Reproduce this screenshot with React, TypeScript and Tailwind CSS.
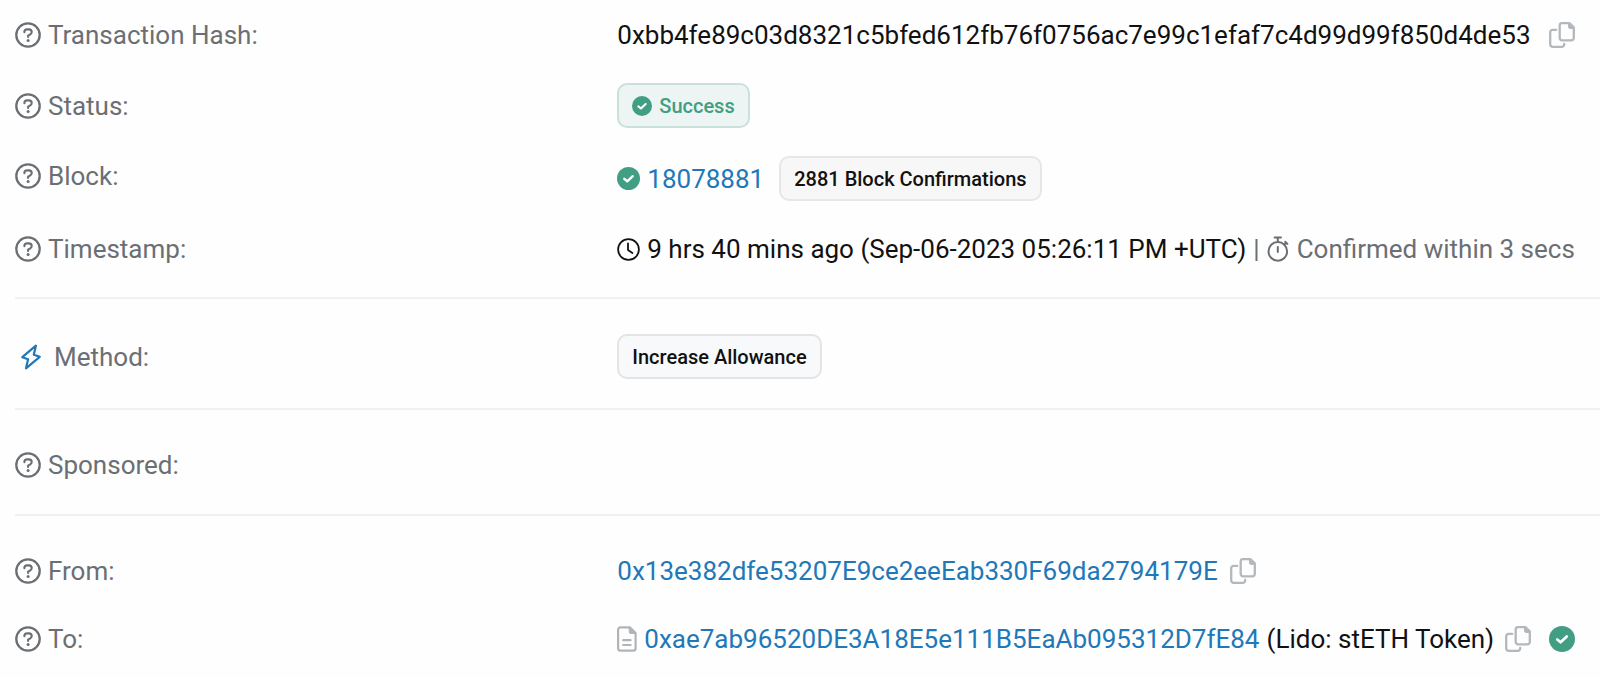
import type { ReactNode } from "react";

function QuestionIcon() {
  return (
    <svg className="size-[26px] shrink-0" viewBox="0 0 26 26" fill="none" stroke="currentColor" aria-hidden="true">
      <circle cx="13" cy="13" r="11.7" strokeWidth="2.3" />
      <path d="M9.4 10.2V9.9C9.4 8.3 10.7 7.4 12.2 7.4H13.9C15.5 7.4 16.7 8.5 16.7 10C16.7 11 16.2 11.8 15.3 12.3L13.1 13.6V14.9" strokeWidth="2.1" strokeLinecap="round" strokeLinejoin="round" />
      <circle cx="13.1" cy="18.4" r="1.5" fill="currentColor" stroke="none" />
    </svg>
  );
}

function CheckIcon({ className }: { className: string }) {
  return (
    <svg className={`shrink-0 text-[#419e82] ${className}`} viewBox="0 0 24 24" fill="none" aria-hidden="true">
      <circle cx="12" cy="12" r="12" fill="currentColor" />
      <path d="M7.6 12.4L10.7 15L16.4 9.6" stroke="white" strokeWidth="2.5" strokeLinecap="round" strokeLinejoin="round" />
    </svg>
  );
}

function ClockIcon() {
  return (
    <svg className="size-[23px] shrink-0" viewBox="0 0 23 23" fill="none" stroke="currentColor" strokeWidth="1.8" strokeLinecap="round" strokeLinejoin="round" aria-hidden="true">
      <circle cx="11.5" cy="11.5" r="10.4" />
      <path d="M11 5.3V12L15.4 15" />
    </svg>
  );
}

function StopwatchIcon() {
  return (
    <svg className="h-[26px] w-[22px] shrink-0" viewBox="0 0 22 26" fill="none" stroke="currentColor" strokeWidth="2" strokeLinecap="round" aria-hidden="true">
      <circle cx="10.8" cy="15.4" r="9.3" />
      <path d="M7.6 1.6H14M10.8 1.8V5.5M17.2 8.6L19.2 6.6M18.2 5.8L20.4 7.9M10.8 11V16" />
    </svg>
  );
}

function BoltIcon() {
  return (
    <svg className="h-[26px] w-[20px] shrink-0 text-[#2178b8]" viewBox="0 0 20 26" fill="none" stroke="currentColor" strokeWidth="2.2" strokeLinejoin="round" aria-hidden="true">
      <path d="M14.9 1.7L1.3 13.2L7.1 15.2L5 24.3L18.7 12.8L12.8 10.8Z" />
    </svg>
  );
}

function CopyButton({ label }: { label: string }) {
  return (
    <button type="button" aria-label={label} className="shrink-0 text-[#b3b8bd]">
      <svg className="block size-[26px]" viewBox="0 0 26 26" fill="none" stroke="currentColor" strokeWidth="2.3" strokeLinecap="round" strokeLinejoin="round" aria-hidden="true">
        <path d="M13 1.2H20.6L24.8 5.4V16A2.3 2.3 0 0 1 22.5 18.3H13A2.3 2.3 0 0 1 10.7 16V3.5A2.3 2.3 0 0 1 13 1.2Z" />
        <path d="M19.6 1.2L24.8 6.4H20.8A1.2 1.2 0 0 1 19.6 5.2Z" fill="currentColor" strokeWidth="1" />
        <path d="M7.2 7.9H3.6A2.4 2.4 0 0 0 1.2 10.3V22.4A2.4 2.4 0 0 0 3.6 24.8H12.8A2.4 2.4 0 0 0 15.2 22.4V22" />
      </svg>
    </button>
  );
}

function FileIcon() {
  return (
    <svg className="h-[26px] w-[20px] shrink-0 text-[#b1b4b7]" viewBox="0 0 20 26" fill="none" stroke="currentColor" strokeWidth="2.2" strokeLinecap="round" strokeLinejoin="round" aria-hidden="true">
      <path d="M3.5 1.3H12.8L18.6 7V22.3A2.4 2.4 0 0 1 16.2 24.7H3.5A2.4 2.4 0 0 1 1.1 22.3V3.7A2.4 2.4 0 0 1 3.5 1.3Z" />
      <path d="M12.3 1.3L18.6 7.5H13.6A1.3 1.3 0 0 1 12.3 6.2Z" fill="currentColor" strokeWidth="1" />
      <path d="M6.2 14.2H13.6M6.2 19H13.6" />
    </svg>
  );
}

type RowProps = { label: string; icon?: ReactNode; top?: boolean; children?: ReactNode };

function Row({ label, icon, top, children }: RowProps) {
  return (
    <div className="grid min-h-[68px] grid-cols-[38%_1fr] items-center py-[14px]">
      <dt className={`flex h-10 items-center gap-[7px] text-[#6b6f74] ${top ? "self-start" : ""}`}>
        {icon ?? <QuestionIcon />}
        {label}
      </dt>
      <dd className="flex items-center whitespace-nowrap">{children}</dd>
    </div>
  );
}

function Section({ children }: { children: ReactNode }) {
  return <dl className="border-t-2 border-[#f0f1f2] pt-[21px] pb-[15px]">{children}</dl>;
}

const badge = "flex h-[45px] items-center rounded-[10px] border-2 px-[13px] text-[20px] font-medium";
const link = "text-[#2178b8]";

export default function App() {
  return (
    <main className="bg-[#fefefe] pl-[15px] font-[Roboto,sans-serif] text-[26px] leading-10 text-[#111111]">
      <dl className="pt-px pb-[14px]">
        <Row label="Transaction Hash:">
          <span className="mr-[18px]">0xbb4fe89c03d8321c5bfed612fb76f0756ac7e99c1efaf7c4d99d99f850d4de53</span>
          <CopyButton label="Copy transaction hash" />
        </Row>
        <Row label="Status:">
          <span className={`${badge} gap-[7px] border-[#c9e1da] bg-[#ecf5f3] text-[#419e82]`}>
            <CheckIcon className="size-[20px]" />
            Success
          </span>
        </Row>
        <Row label="Block:" top>
          <CheckIcon className="mr-[7px] size-[23px]" />
          <a href="#block" className={`${link} mr-[15px]`}>18078881</a>
          <span className={`${badge} border-[#e6e7e8] bg-[#f7f7f8]`}>2881 Block Confirmations</span>
        </Row>
        <Row label="Timestamp:">
          <ClockIcon />
          <span className="ml-[7px]">9 hrs 40 mins ago (Sep-06-2023 05:26:11 PM +UTC)</span>
          <span className="mx-[7px] text-[#6b6f74]">|</span>
          <span className="flex items-center gap-2 text-[#6b6f74]">
            <StopwatchIcon />
            Confirmed within 3 secs
          </span>
        </Row>
      </dl>
      <Section>
        <Row label="Method:" icon={<span className="mx-[6px]"><BoltIcon /></span>}>
          <span className={`${badge} border-[#e2e4e6] bg-[#f8f9fa]`}>Increase Allowance</span>
        </Row>
      </Section>
      <Section>
        <Row label="Sponsored:" />
      </Section>
      <Section>
        <Row label="From:">
          <a href="#from" className={`${link} mr-3`}>0x13e382dfe53207E9ce2eeEab330F69da2794179E</a>
          <CopyButton label="Copy sender address" />
        </Row>
        <Row label="To:">
          <FileIcon />
          <a href="#to" className={`${link} mx-[7px]`}>0xae7ab96520DE3A18E5e111B5EaAb095312D7fE84</a>
          <span className="mr-[11px]">(Lido: stETH Token)</span>
          <CopyButton label="Copy recipient address" />
          <CheckIcon className="ml-[18px] size-[26px]" />
        </Row>
      </Section>
    </main>
  );
}
